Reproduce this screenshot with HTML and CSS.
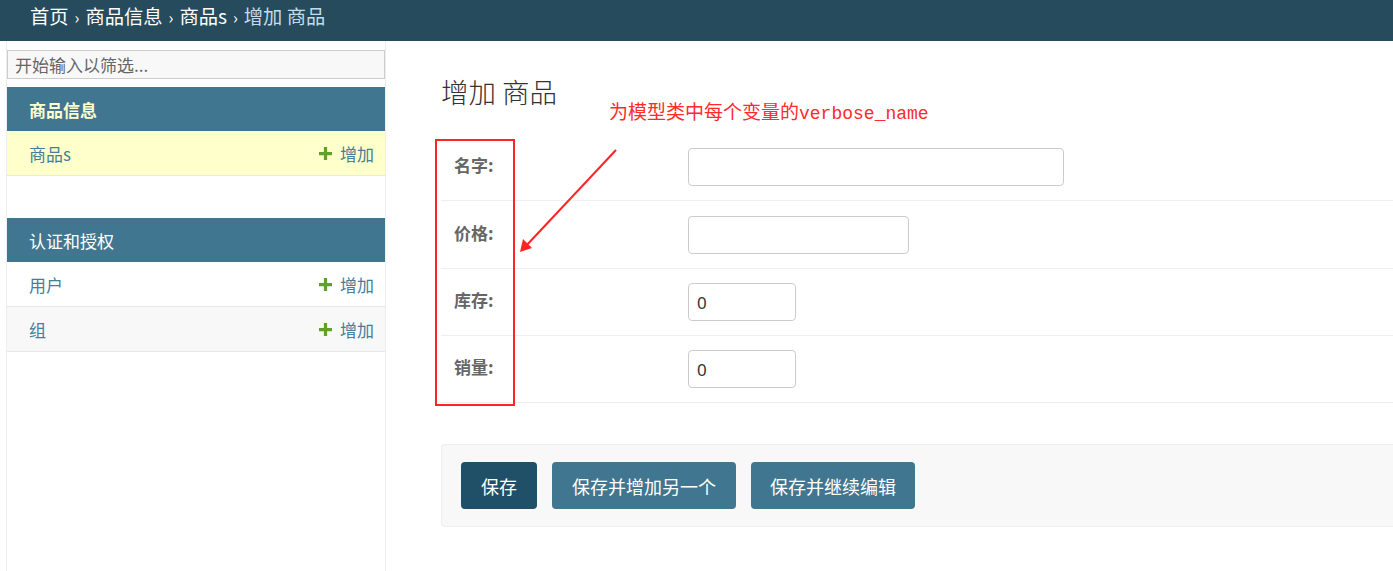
FILE: index.html
```html
<!DOCTYPE html>
<html lang="zh">
<head>
<meta charset="utf-8">
<title>增加 商品</title>
<link rel="stylesheet" href="styles.css">
</head>
<body>
<header class="topbar">
  <nav class="crumbs">
    <a href="#">首页</a><span class="sep">›</span><a href="#">商品信息</a><span class="sep">›</span><a href="#">商品s</a><span class="sep">›</span><span class="current">增加 商品</span>
  </nav>
</header>
<div class="layout">
  <aside class="sidebar">
    <input class="filter" type="search" placeholder="开始输入以筛选...">
    <section class="module">
      <div class="caption current-app">商品信息</div>
      <div class="mrow selected"><a class="model" href="#">商品s</a><a class="add" href="#"><svg class="plus" viewBox="0 0 12 12"><path d="M4.5 0h3v4.5H12v3H7.5V12h-3V7.5H0v-3h4.5z"/></svg>增加</a></div>
    </section>
    <section class="module">
      <div class="caption">认证和授权</div>
      <div class="mrow"><a class="model" href="#">用户</a><a class="add" href="#"><svg class="plus" viewBox="0 0 12 12"><path d="M4.5 0h3v4.5H12v3H7.5V12h-3V7.5H0v-3h4.5z"/></svg>增加</a></div>
      <div class="mrow alt"><a class="model" href="#">组</a><a class="add" href="#"><svg class="plus" viewBox="0 0 12 12"><path d="M4.5 0h3v4.5H12v3H7.5V12h-3V7.5H0v-3h4.5z"/></svg>增加</a></div>
    </section>
  </aside>
  <main class="content">
    <h1 class="title">增加 商品</h1>
    <form class="form">
      <div class="frow"><label class="flabel">名字:</label><input class="finput w-lg" type="text"></div>
      <div class="frow tall"><label class="flabel">价格:</label><input class="finput w-md" type="text"></div>
      <div class="frow"><label class="flabel">库存:</label><input class="finput w-sm" type="text" value="0"></div>
      <div class="frow"><label class="flabel">销量:</label><input class="finput w-sm" type="text" value="0"></div>
      <div class="submit-row">
        <button class="btn primary" type="button">保存</button>
        <button class="btn" type="button">保存并增加另一个</button>
        <button class="btn" type="button">保存并继续编辑</button>
      </div>
    </form>
  </main>
</div>
<div class="note">为模型类中每个变量的<span class="mono">verbose_name</span></div>
<svg class="marks" width="1393" height="571" viewBox="0 0 1393 571">
  <rect x="436" y="140" width="78" height="265" fill="none" stroke="#ff2424" stroke-width="2"/>
  <line x1="616" y1="150" x2="525" y2="247" stroke="#ff2424" stroke-width="2"/>
  <path d="M520 252 L523 239 L532 248 Z" fill="#ff2424"/>
</svg>
</body>
</html>
```
FILE: styles.css
```css
* { box-sizing: border-box; }
html, body { margin: 0; padding: 0; }
body {
  font-family: "Noto Sans CJK SC", "Noto Sans", sans-serif;
  background: #fff;
  color: #333;
  overflow: hidden;
  position: relative;
  height: 571px;
}
a { text-decoration: none; }

.topbar {
  height: 41px;
  background: #264b5d;
  display: flex;
  align-items: center;
  padding: 0 0 7px 30px;
}
.crumbs {
  font-size: 19.3px;
  color: #fff;
  line-height: 1;
  white-space: nowrap;
}
.crumbs a { color: #fff; }
.crumbs .sep { font-size: 16px; margin: 0 6px; color: #fff; }
.crumbs .current { color: #c4dce8; }

.layout { display: flex; align-items: stretch; }

.sidebar {
  margin-left: 6px;
  width: 380px;
  flex: none;
  border-left: 1px solid #eee;
  border-right: 1px solid #eee;
  min-height: 530px;
  padding-top: 9px;
}
.filter {
  display: block;
  width: 100%;
  height: 29px;
  margin: 0;
  border: 1px solid #ccc;
  background: #f8f8f8;
  font-family: inherit;
  font-size: 17px;
  padding: 0 7px;
  color: #333;
  outline: none;
}
.filter::placeholder { color: #666; }

.module { margin-top: 8px; }
.module + .module { margin-top: 42px; }
.caption {
  height: 44px;
  background: #417690;
  color: #fff;
  font-size: 17px;
  display: flex;
  align-items: center;
  padding-left: 22px;
}
.caption.current-app { color: #ffc; font-weight: bold; }
.mrow {
  height: 45px;
  display: flex;
  align-items: center;
  justify-content: space-between;
  padding: 0 11px 0 22px;
  border-bottom: 1px solid #e8e8e8;
  font-size: 17px;
  background: #fff;
}
.mrow.selected { background: #ffc; }
.mrow.alt { background: #f8f8f8; }
.model { color: #447e9b; }
.add { color: #447e9b; display: flex; align-items: center; }
.plus { width: 13px; height: 13px; fill: #5fa225; margin-right: 8px; }

.content {
  flex: 1;
  padding-left: 55px;
}
.title {
  margin: 33px 0 0 0;
  font-size: 27.5px;
  font-weight: 300;
  color: #333;
  line-height: 34px;
  height: 60px;
}
.frow {
  display: flex;
  align-items: center;
  padding: 0 0 3px 13px;
  border-bottom: 1px solid #eee;
  height: 67px;
}
.frow.tall { height: 68px; }
.flabel {
  width: 234px;
  flex: none;
  font-weight: bold;
  color: #666;
  font-size: 17px;
  position: relative;
  top: -1px;
}
.finput {
  height: 38px;
  border: 1px solid #ccc;
  border-radius: 4px;
  font-family: "Noto Sans", sans-serif;
  font-size: 17px;
  padding: 0 8px;
  color: #333;
  background: #fff;
  margin-top: 3px;
}
.w-lg { width: 376px; }
.w-md { width: 221px; }
.w-sm { width: 108px; }

.submit-row {
  margin-top: 41px;
  height: 83px;
  border: 1px solid #eee;
  border-right: none;
  border-radius: 4px 0 0 4px;
  background: #f8f8f8;
  display: flex;
  align-items: center;
  gap: 15px;
  padding-left: 19px;
}
.btn {
  height: 47px;
  border: none;
  border-radius: 4px;
  background: #417690;
  color: #fff;
  font-family: inherit;
  font-size: 18px;
  padding: 0 20px;
  cursor: pointer;
}
.btn.primary { background: #205067; }
.btn + .btn + .btn { padding: 0 19px; }

.note {
  position: absolute;
  left: 609px;
  top: 99px;
  color: #ff2a2a;
  font-size: 19px;
  line-height: 24px;
  white-space: nowrap;
}
.mono { font-family: "Liberation Mono", monospace; font-size: 18px; }
.marks {
  position: absolute;
  left: 0;
  top: 0;
  pointer-events: none;
}
```
